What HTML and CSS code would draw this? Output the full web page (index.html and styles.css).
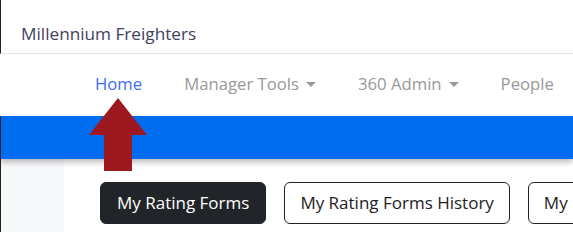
FILE: index.html
```html
<!DOCTYPE html>
<html>
<head>
<meta charset="utf-8">
<link rel="stylesheet" href="styles.css">
</head>
<body>
<div class="page">
  <header class="brand">Millennium Freighters</header>
  <nav class="nav">
    <a class="nav-item active">Home</a>
    <a class="nav-item">Manager Tools <span class="caret"></span></a>
    <a class="nav-item">360 Admin <span class="caret"></span></a>
    <a class="nav-item">People</a>
  </nav>
  <div class="bar"></div>
  <div class="body">
    <aside class="side"></aside>
    <main class="main">
      <button class="btn btn-dark">My Rating Forms</button>
      <button class="btn btn-outline">My Rating Forms History</button>
      <button class="btn btn-outline">My Rating Forms Archive</button>
    </main>
  </div>
  <svg class="arrow" width="58" height="73" viewBox="0 0 58 73">
    <polygon points="29,0 58,37 43,37 43,73 15,73 15,37 0,37" fill="#9e1820"/>
  </svg>
</div>
</body>
</html>
```
FILE: styles.css
```css
* { box-sizing: border-box; }
html, body { margin: 0; padding: 0; background: #fff; }
body { font-family: "Open Sans", "Noto Sans", sans-serif; overflow: hidden; }
.page { position: relative; width: 573px; height: 232px; overflow: hidden; }
.brand {
  height: 54px;
  padding: 22px 0 0 20px;
  font-size: 17.2px;
  color: #3f3f5e;
  border-bottom: 1px solid #e3e3e3;
  border-left: 1px solid #222;
}
.nav {
  height: 62px;
  display: flex;
  align-items: center;
  gap: 42px;
  padding-left: 95px;
  padding-bottom: 4px;
}
.nav-item {
  font-size: 16.7px;
  color: #999;
  white-space: nowrap;
  display: flex;
  align-items: center;
  gap: 7px;
}
.nav-item.active { color: #3b6ef5; }
.caret {
  display: inline-block;
  width: 0; height: 0;
  border-left: 5px solid transparent;
  border-right: 5px solid transparent;
  border-top: 5px solid #999;
  margin-top: 2px;
}
.bar {
  height: 43px;
  background: #006cf0;
  border-left: 1px solid #222;
  box-shadow: 0 3px 6px rgba(0,0,0,0.28);
  position: relative;
  z-index: 1;
}
.body {
  display: grid;
  grid-template-columns: 64px 1fr;
  height: 73px;
}
.side { background: #f7f8fa; border-left: 1px solid #222; }
.main {
  display: flex;
  gap: 18px;
  padding: 23px 0 0 36px;
  align-items: flex-start;
}
.btn {
  font-family: inherit;
  font-size: 17px;
  height: 42px;
  padding: 0 15px;
  border-radius: 6px;
  white-space: nowrap;
  flex-shrink: 0;
  line-height: 38px;
}
.btn-dark { background: #212529; color: #fff; border: 1px solid #212529; padding: 0 16px; }
.btn-outline { background: #fff; color: #222; border: 1px solid #222; }
.arrow { position: absolute; left: 89px; top: 98px; z-index: 2; }
```
